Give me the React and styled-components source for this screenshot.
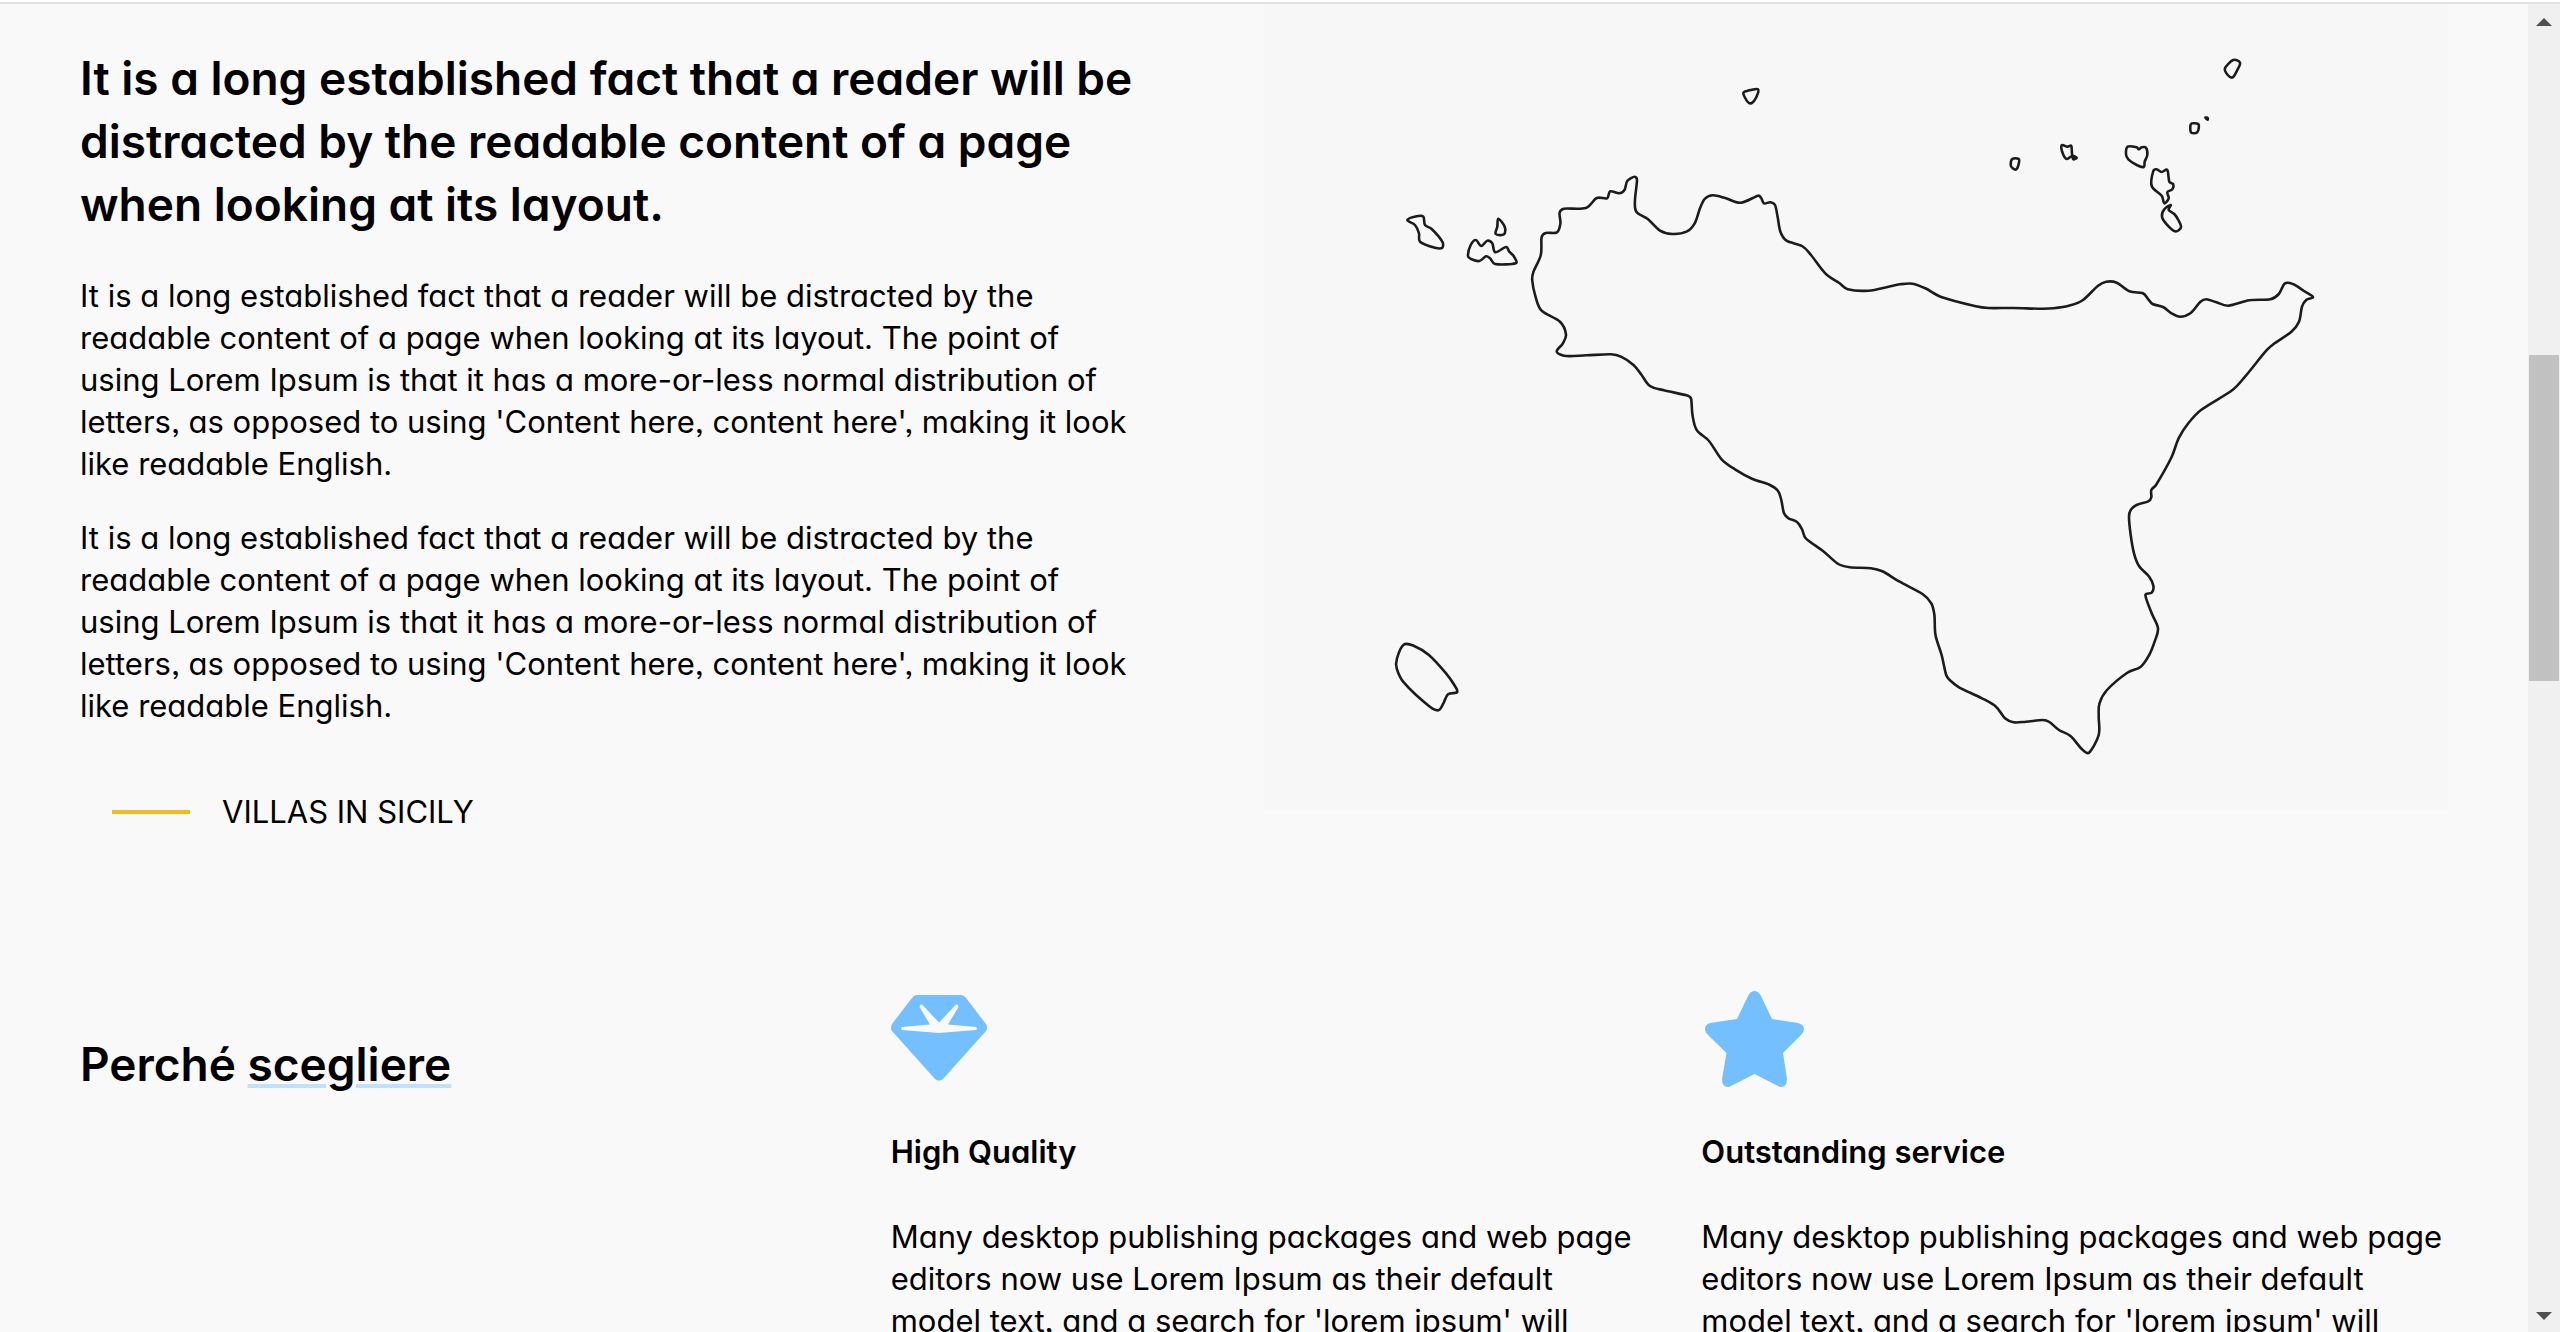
import React from "react";
import styled, { createGlobalStyle } from "styled-components";

const GlobalStyle = createGlobalStyle`
  * { box-sizing: border-box; }
  body {
    margin: 0;
    background: #f9f9f9;
    color: #000;
    font-family: Inter, Lato, sans-serif;
    font-feature-settings: "cv11" 1, "ss03" 1;
    overflow: hidden;
  }
  h2, h3, p { margin: 0; }
`;

const Window = styled.div`
  height: 100vh;
  display: flex;
  flex-direction: column;
  overflow: hidden;
`;

const TopEdge = styled.div`
  flex: none;
  height: 4px;
  background: #fff;
  border-bottom: 2px solid #e1e1e1;
`;

const Viewport = styled.div`
  flex: 1;
  min-height: 0;
  display: flex;
`;

const Page = styled.main`
  flex: 1;
  min-width: 0;
  padding: 0 80px;
  display: flex;
  flex-direction: column;
  gap: 157px;
  overflow: hidden;
`;

const Intro = styled.section`
  display: grid;
  grid-template-columns: 1fr 1fr;
  align-items: start;
`;

const IntroText = styled.div`
  padding: 43px 100px 0 0;
`;

const Title = styled.h2`
  font-size: 46px;
  line-height: 63px;
  font-weight: 600;
  white-space: nowrap;
`;

const Highlight = styled.span`
  text-decoration: underline;
  text-decoration-color: #bfe0ff;
  text-decoration-thickness: 4px;
  text-underline-offset: 3px;
`;

const Paragraph = styled.p`
  font-size: 31px;
  line-height: 42px;
  white-space: nowrap;
`;

const Copy = styled.div`
  margin-top: 39px;
  display: flex;
  flex-direction: column;
  gap: 32px;
`;

const Tagline = styled.div`
  margin-top: 64px;
  padding-left: 32px;
  display: flex;
  align-items: center;
  gap: 32px;
`;

const Dash = styled.span`
  width: 78px;
  height: 4px;
  background: #f0bc1b;
`;

const MapPanel = styled.figure`
  margin: 0;
  background: #f7f7f7;

  svg {
    display: block;
    width: 100%;
    height: auto;
  }
`;

const Reasons = styled.section`
  display: grid;
  grid-template-columns: repeat(3, 1fr);
  gap: 64px;
`;

const ReasonsTitle = styled(Title)`
  padding-top: 43px;
`;

const Reason = styled.article`
  display: flex;
  flex-direction: column;
  gap: 43px;
`;

const ReasonIcon = styled.svg`
  display: block;
  width: 106px;
  height: 98px;
  fill: #74bfff;
`;

const ReasonTitle = styled.h3`
  font-size: 31px;
  line-height: 42px;
  font-weight: 600;
`;

const ScrollTrack = styled.div`
  flex: none;
  width: 32px;
  padding: 14px 1px 12px;
  background: #f0f0f0;
  display: flex;
  flex-direction: column;
  align-items: center;
`;

const Arrow = styled.span`
  border: 8px solid transparent;
  border-top-width: ${(p) => (p.$down ? "8px" : "0")};
  border-bottom-width: ${(p) => (p.$down ? "0" : "8px")};
  border-${(p) => (p.$down ? "top" : "bottom")}-color: #505050;
`;

const ThumbLane = styled.div`
  flex: 1;
  align-self: stretch;
  display: flex;
  flex-direction: column;
`;

const Thumb = styled.div`
  flex: 326;
  background: #c1c1c1;
`;

const Space = styled.div`
  flex: ${(p) => p.$share};
`;

const SICILY =
  "1556.7,351.7 1566,356 1586.5,355.3 1611,354.3 1621,356.7 1633.5,365 1641.6,375 1650,386 1664,390.3 1686.5,395.3 1691,398.5 1692.5,415 1696.7,430 1709,441 1721.6,459.3 1735,469.3 1752,478.7 1769.4,484.7 1777.9,490.7 1781.3,500 1784,513.3 1788.6,518.3 1797,522 1802,529.3 1805.8,538.3 1823,551 1838.3,564 1849.8,567.3 1870.8,568.3 1882.3,571.3 1899.6,581.7 1922.5,594 1931.3,603.3 1934.4,615 1935.5,635 1941.6,655 1946.2,675 1949.7,680 1959,687.3 1982,698.3 1996,706.7 2005,718.3 2013.6,722.3 2026,721.7 2043,720 2049.4,722 2059,730 2070.5,736 2081.8,749 2089,752.7 2098.7,735 2098.7,716.7 2099.5,703.3 2107,690 2127.3,672.7 2140.8,666.7 2149.2,655 2154.6,641.7 2158,628.3 2151.7,613.3 2145.4,595 2151.7,592.7 2153.4,586 2149.2,576.7 2139,566 2134,553.3 2130.7,535 2129,516.7 2130.7,510 2136.5,505 2148.3,501.3 2151.3,497.3 2151.3,490 2156,485 2171.5,457.3 2178.6,438.3 2188.3,423.3 2201,410 2232.5,390 2245,376.7 2266.2,350.7 2274.6,343.3 2291.4,331.7 2299,321.7 2302,306.7 2306.2,300 2313,297 2304,291 2293.5,284.3 2285,283.3 2278.8,294 2270.4,299.3 2249.4,300.3 2228.3,305.7 2215.7,302 2206.4,299.3 2200.5,301.7 2190.4,313.3 2180,316.7 2171.5,313.3 2163,307 2152.5,304 2148.3,299.3 2142.9,293.3 2129.4,291.3 2116.8,282.7 2106.2,281.7 2097.8,286 2083,300 2070.5,305.3 2053.6,308.3 2038.9,308.7 2013.6,308 1988.4,308 1975.8,306.3 1942,297.3 1925.3,288.3 1912.6,283.7 1900,284.3 1888.6,286.7 1868.2,290.7 1847.8,289.3 1839.6,283.3 1825.3,273.3 1811,255 1802,246 1786.5,240.7 1780.4,231.7 1777.6,216.7 1775,205 1770.2,202.3 1764,203.3 1761.2,198 1758,195.7 1740.8,202.7 1725.3,198 1713,195.3 1705,198.7 1700,208.3 1694.7,223.3 1686.5,231.7 1672.2,234 1660,230.7 1647.8,219 1636.3,211.7 1635,200 1637,180 1634.7,176.7 1627.3,181 1624.5,190 1619.2,193.3 1610.2,191.3 1607,198.3 1596.7,198 1585.7,208 1564,208.7 1559.6,212.7 1560.4,223.3 1557,232.3 1545.7,233 1541.6,237.3 1540.8,255 1533.5,271.7 1532.2,280 1535.5,296.7 1541.6,310.7 1560,321.7 1566,334.3 1562.9,343.3";

const ISLANDS = [
  "1407.3,220 1416.7,216.3 1423.3,216.7 1425,225 1431.7,229 1442.3,241.7 1442.3,247.7 1435,247.7 1420,241.7 1419,233.3 1415,225",
  "1498.3,218.7 1504.7,226.7 1504,234.3 1495.7,234 1497.3,226.7",
  "1468,256 1470.7,245 1476,240 1481,246 1487.3,240.7 1492.3,243.3 1495.3,252.3 1506,247 1509.3,251.7 1514,256.7 1515.7,263.3 1495,264 1490,258.3 1486,256.3 1479.3,261 1471.7,259.3",
  "1743.3,93.3 1747.8,90.7 1758,89.3 1756.3,97.3 1751.8,103 1747.8,102",
  "1403.6,644.7 1413.6,645.7 1428.9,655 1446,673.3 1453.7,684 1457.2,692 1448,694.3 1443.4,703.3 1438.4,710.3 1428.9,706 1404,682.7 1396.7,668.3 1397,658.3",
  "2010.7,165 2012.3,159 2018.7,159 2018.7,164 2016.3,169.3 2012.7,168.3",
  "2061.7,145.3 2067.3,146.7 2071.3,146 2072.3,155 2076.7,157.7 2073.3,159.3 2072,156 2066.7,159 2062.7,153.3",
  "2127.7,146.7 2136.7,147.3 2138.7,149.3 2141.7,147.3 2146,147.7 2147.3,155 2144.7,161.7 2143.7,167 2136.7,165 2128.3,159.3 2126,154.3",
  "2153.3,171 2156.7,169.3 2161.7,172 2167.3,170 2169.3,181.7 2173.3,184.3 2172.3,189.3 2167.3,192.3 2168.7,198.3 2164.3,203.3 2161.7,195.7 2151.7,186",
  "2170.7,205 2168.7,210 2174.3,214 2178.3,220 2181,227.3 2175,231.3 2166.7,224.3 2162,216.7 2164.3,209.3",
  "2190.7,124.3 2194,123.3 2198.7,124.7 2197.3,132.3 2191,132.3",
  "2225,68.3 2233.3,60 2240,62.7 2237.3,70 2232.7,77.3 2227.7,75",
  "2205.4,117.6 2207.6,118 2207.6,119.6",
  "2073.6,156.6 2075.4,157 2074.6,158.6",
];

// Closed Catmull-Rom curve through the coast points, written as cubic Béziers.
function coastline(points) {
  const pts = points.split(" ").map((pair) => pair.split(",").map(Number));
  const at = (i) => pts[(i + pts.length) % pts.length];
  let d = `M${at(0)}`;
  for (let i = 0; i < pts.length; i += 1) {
    const [a, b, c, e] = [at(i - 1), at(i), at(i + 1), at(i + 2)];
    // Handles stay short next to a short segment so corners do not overshoot.
    const span = Math.hypot(c[0] - b[0], c[1] - b[1]);
    const handle = (from, to) => {
      const length = Math.hypot(to[0] - from[0], to[1] - from[1]) || 1;
      const k = Math.min(1 / 6, (span * 0.36) / length);
      return [(to[0] - from[0]) * k, (to[1] - from[1]) * k];
    };
    const h1 = handle(a, c);
    const h2 = handle(b, e);
    d += `C${b[0] + h1[0]},${b[1] + h1[1]} ${c[0] - h2[0]},${c[1] - h2[1]} ${c}`;
  }
  return `${d}Z`;
}

function SicilyMap() {
  return (
    <MapPanel>
      <svg viewBox="1264 4 1184 806" role="img" aria-label="Sicily">
        <g fill="none" stroke="#1c1c1c" strokeWidth="2.6" strokeLinejoin="round">
          {[SICILY, ...ISLANDS].map((shape) => (
            <path key={shape.slice(0, 16)} d={coastline(shape)} />
          ))}
        </g>
      </svg>
    </MapPanel>
  );
}

const introParagraph = (
  <Paragraph>
    It is a long established fact that a reader will be distracted by the
    <br />
    readable content of a page when looking at its layout. The point of
    <br />
    using Lorem Ipsum is that it has a more-or-less normal distribution of
    <br />
    letters, as opposed to using 'Content here, content here', making it look
    <br />
    like readable English.
  </Paragraph>
);

function DiamondIcon() {
  return (
    <ReasonIcon viewBox="0 0 106 98" aria-hidden="true">
      <path
        fillRule="evenodd"
        d="M26 5H70Q73 5 75 8L95 34Q97 38 95 41L52 89Q48 92 44 89L1 41Q-1 38 1 34L21 8Q23 5 26 5ZM11 37Q9 38.500 11 40L48 43L85 40Q87 38.500 85 37L57 34.500L67.500 17Q67 13.500 64.500 15L48 32.500L31.500 15Q29 13.500 28.500 17L39 34.500Z"
      />
    </ReasonIcon>
  );
}

function StarIcon() {
  return (
    <ReasonIcon viewBox="0 0 106 98" aria-hidden="true">
      <path d="M47.500 5Q50 1 53.500 1Q57 1 59.500 5L71 29L97 33Q103 34.500 103 39Q103 42 100 45L82 63L86 89Q86 97.500 79 97L53.500 84L28 97Q21 97.500 21 89L25.500 63L7 45Q4 42 4 39Q4 34.500 9 33L36 29Z" />
    </ReasonIcon>
  );
}

function ReasonCard({ icon, title }) {
  return (
    <Reason>
      {icon}
      <ReasonTitle>{title}</ReasonTitle>
      <Paragraph>
        Many desktop publishing packages and web page
        <br />
        editors now use Lorem Ipsum as their default
        <br />
        model text, and a search for 'lorem ipsum' will
      </Paragraph>
    </Reason>
  );
}

export default function App() {
  return (
    <Window>
      <GlobalStyle />
      <TopEdge />
      <Viewport>
        <Page>
          <Intro>
            <IntroText>
              <Title>
                It is a long established fact that a reader will be
                <br />
                distracted by the readable content of a page
                <br />
                when looking at its layout.
              </Title>
              <Copy>
                {introParagraph}
                {introParagraph}
              </Copy>
              <Tagline>
                <Dash />
                <Paragraph>VILLAS IN SICILY</Paragraph>
              </Tagline>
            </IntroText>
            <SicilyMap />
          </Intro>
          <Reasons>
            <ReasonsTitle>
              Perché <Highlight>scegliere</Highlight>
            </ReasonsTitle>
            <ReasonCard icon={<DiamondIcon />} title="High Quality" />
            <ReasonCard icon={<StarIcon />} title="Outstanding service" />
          </Reasons>
        </Page>
        <ScrollTrack aria-hidden="true">
          <Arrow />
          <ThumbLane>
            <Space $share={329} />
            <Thumb />
            <Space $share={631} />
          </ThumbLane>
          <Arrow $down />
        </ScrollTrack>
      </Viewport>
    </Window>
  );
}
